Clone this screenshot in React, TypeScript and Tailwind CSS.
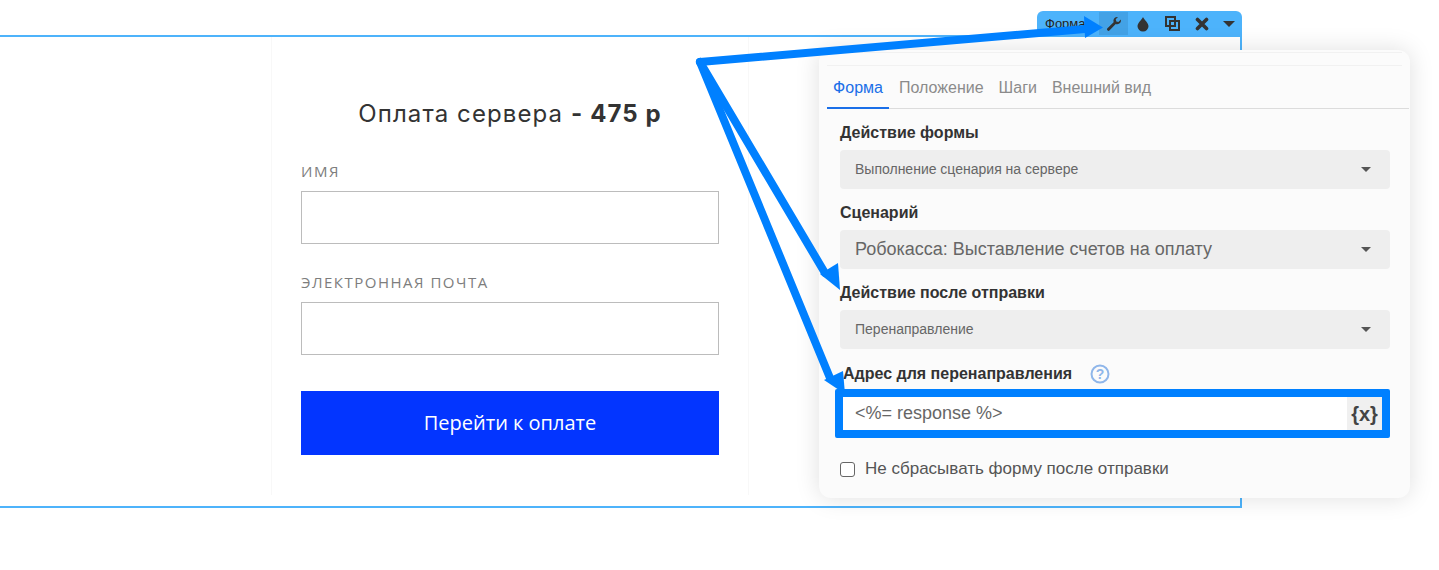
import React from "react";

function Caret() {
  return <span className="w-0 h-0 border-x-[5px] border-x-transparent border-t-[5px] border-t-[#555]" />;
}

function Select({ text, big }: { text: string; big?: boolean }) {
  return (
    <div className={`h-[39px] rounded-[4px] bg-[#eeeeee] flex items-center justify-between pl-[15px] pr-[19px] text-[#666] ${big ? "text-[18px]" : "text-[14px]"}`}>
      <span>{text}</span>
      <Caret />
    </div>
  );
}

function Label({ children, className = "" }: { children: React.ReactNode; className?: string }) {
  return <div className={`text-[16px] leading-[20px] font-bold text-[#333] ${className}`}>{children}</div>;
}

function FormField({ label }: { label: string }) {
  return (
    <div className="mb-[28px]">
      <div className="text-[15px] leading-[20px] tracking-[1.5px] text-[#7d7d7d] uppercase mb-[10px] font-['Open_Sans',sans-serif]">{label}</div>
      <div className="h-[53px] border border-[#bcbcbc] bg-white" />
    </div>
  );
}

function Toolbar() {
  return (
    <div className="absolute left-[1037px] top-[11px] w-[205px] h-[25px] bg-[#4db3fb] rounded-t-[6px] flex items-center text-[#333] overflow-hidden">
      <span className="w-[63px] pl-[8px] text-[13px] text-[#222] whitespace-nowrap overflow-hidden">Форма</span>
      <div className="w-[29px] h-[23px] bg-[#43a2e6] flex items-center justify-center">
        <svg width="16" height="16" viewBox="0 0 16 16"><path fill="#333" d="M15 4.2a4 4 0 0 1-5.3 3.9L3.4 14.6a1.6 1.6 0 0 1-2.2-2.2l6.400-6.200A4 4 0 0 1 12 1l-2.300 2.300.6 2.100 2.100.5L15 3.600z" /></svg>
      </div>
      <div className="w-[30px] flex justify-center">
        <svg width="14" height="16" viewBox="0 0 14 16"><path fill="#333" d="M7 1c1 2.500 5.500 6 5.500 9.200A5.400 5.400 0 0 1 7 15.500a5.400 5.400 0 0 1-5.500-5.300C1.500 7 6 3.500 7 1z" /></svg>
      </div>
      <div className="w-[30px] flex justify-center">
        <svg width="15" height="15" viewBox="0 0 15 15" fill="none" stroke="#333" strokeWidth="2"><rect x="1" y="1" width="9" height="9" /><rect x="5" y="5" width="9" height="9" /></svg>
      </div>
      <div className="w-[29px] flex justify-center">
        <svg width="14" height="14" viewBox="0 0 14 14" stroke="#333" strokeWidth="3.600" strokeLinecap="round"><path d="M2.500 2.500l9 9M11.500 2.500l-9 9" /></svg>
      </div>
      <div className="w-[26px] flex justify-center">
        <span className="w-0 h-0 border-x-[6px] border-x-transparent border-t-[6px] border-t-[#333]" />
      </div>
    </div>
  );
}

function Panel() {
  return (
    <div className="absolute left-[819px] top-[50px] w-[591px] h-[448px] bg-[#fbfbfb] rounded-[12px] shadow-[0_0_24px_rgba(0,0,0,0.13)] text-[#333]">
      <div className="mt-[2px] mx-[8px] h-[14px] border-y border-[#f1f1f1]" />
      <div className="mt-[10px] h-[33px] ml-[8px] mr-[1px] border-b border-[#dcdcdc] flex text-[16px] text-[#8b8b8b]">
        <div className="h-[33px] w-[62px] text-center text-[#1a6fe8] border-b-2 border-[#1a6fe8]">Форма</div>
        <div className="ml-[10px]">Положение</div>
        <div className="ml-[15px]">Шаги</div>
        <div className="ml-[15px]">Внешний вид</div>
      </div>
      <div className="pl-[21px] pr-[20px]">
        <Label className="mt-[14px] mb-[7px]">Действие формы</Label>
        <Select text="Выполнение сценария на сервере" />
        <Label className="mt-[14px] mb-[7px]">Сценарий</Label>
        <Select text="Робокасса: Выставление счетов на оплату" big />
        <Label className="mt-[14px] mb-[7px]">Действие после отправки</Label>
        <Select text="Перенаправление" />
        <div className="mt-[15px] flex items-center pl-[3px]">
          <Label>Адрес для перенаправления</Label>
          <svg className="ml-[18px]" width="20" height="20" viewBox="0 0 20 20" fill="none">
            <circle cx="10" cy="10" r="8.500" stroke="#8fb6ea" strokeWidth="2" />
            <text x="10" y="15" textAnchor="middle" fontSize="14" fontWeight="700" fill="#8fb6ea" fontFamily="Liberation Sans">?</text>
          </svg>
        </div>
        <div className="mt-[5px] -ml-[5px] -mr-[0px] h-[49px] border-[8px] border-[#0080ff] rounded-[2px] bg-white flex items-center justify-between text-[18px] text-[#666]">
          <span className="pl-[12px]">{"<%= response %>"}</span>
          <span className="h-[33px] w-[35px] bg-[#f0f0f0] flex items-center justify-center font-bold text-[#444] text-[20px]">{"{x}"}</span>
        </div>
        <div className="mt-[20px] flex items-center text-[#555] text-[17px] leading-[22px]">
          <span className="w-[15px] h-[15px] border border-[#666] rounded-[3px] bg-white mr-[10px]" />
          Не сбрасывать форму после отправки
        </div>
      </div>
    </div>
  );
}

function Arrows() {
  return (
    <svg className="absolute left-0 top-0 pointer-events-none" width="1439" height="570" viewBox="0 0 1439 570" fill="none">
      <g stroke="#0080ff" strokeWidth="8" strokeLinecap="round">
        <path d="M700 62L1085 29" />
        <path d="M700 62L825 273" />
        <path d="M700 62L830 378" />
      </g>
      <g fill="#0080ff">
        <path d="M1084 16L1103 27.500L1085 38z" />
        <path d="M840 290L820 274L838 263z" />
        <path d="M845 394L824 380L843 371z" />
      </g>
    </svg>
  );
}

export default function App() {
  return (
    <div className="relative w-[1439px] h-[570px] overflow-hidden bg-white font-['Liberation_Sans',sans-serif]">
      <div className="pt-[35px]">
        <div className="w-[1242px] h-[473px] border-y-2 border-r-2 border-[#4db3fb] pl-[271px]">
          <div className="w-[478px] h-[458px] border-x border-[#f8f8f8] px-[29px] pt-[60px]">
            <div className="text-center text-[24px] leading-[34px] tracking-[1.1px] text-[#333] mb-[30px] font-['Inter',sans-serif]">
              Оплата сервера <b className="font-bold">- 475 р</b>
            </div>
            <FormField label="Имя" />
            <FormField label="Электронная почта" />
            <div className="mt-[36px] h-[64px] bg-[#0335ff] text-white text-[20px] flex items-center justify-center font-['Open_Sans',sans-serif]">Перейти к оплате</div>
          </div>
        </div>
      </div>
      <Toolbar />
      <Panel />
      <Arrows />
    </div>
  );
}
